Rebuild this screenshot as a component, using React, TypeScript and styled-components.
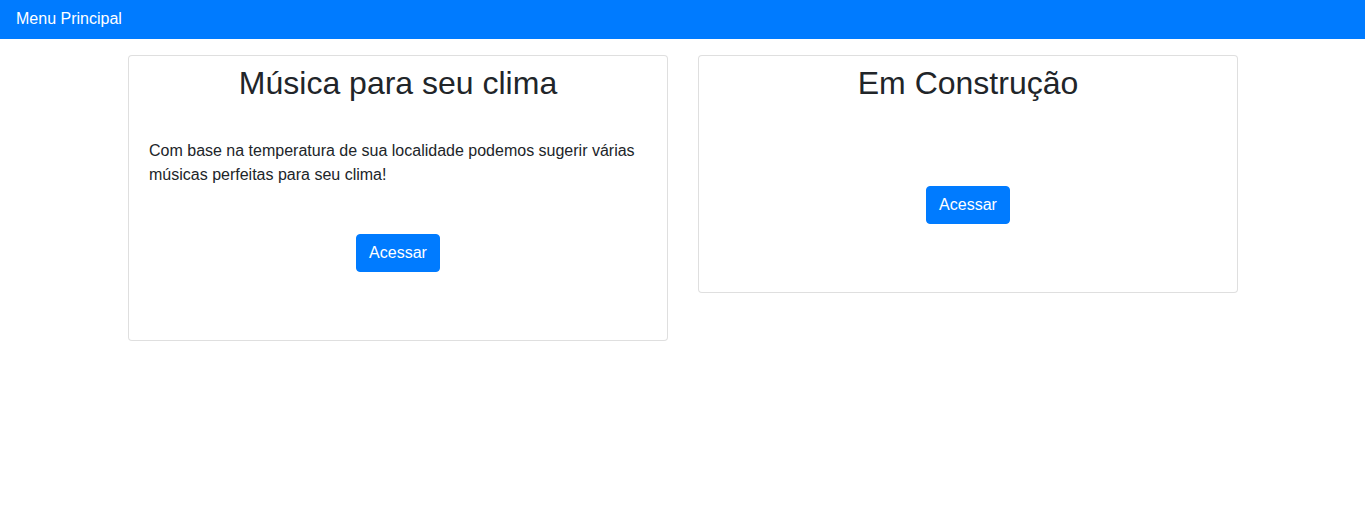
import styled, { createGlobalStyle } from "styled-components";

const GlobalStyle = createGlobalStyle`
  html, body {
    margin: 0;
    padding: 0;
    background: #ffffff;
  }

  body {
    font-family: "Liberation Sans", Arial, sans-serif;
    font-size: 16px;
    line-height: 1.5;
    color: #212529;
  }

  * {
    box-sizing: border-box;
  }
`;

/* --- navbar --- */

const NavBar = styled.nav`
  display: flex;
  align-items: center;
  height: 39px;
  padding: 0 16px 1px;
  background: #007bff;
`;

const Brand = styled.a`
  color: #ffffff;
  font-size: 16px;
  line-height: 24px;
  text-decoration: none;
  cursor: pointer;
`;

/* --- layout --- */

const Container = styled.main`
  width: 1140px;
  margin: 16px auto 0;
  padding: 0 14.5px 0 15.5px;
`;

const Row = styled.div`
  display: grid;
  grid-template-columns: 1fr 1fr;
  column-gap: 30px;
  align-items: start;
`;

const Card = styled.section`
  display: flex;
  flex-direction: column;
  padding: 8px 20px 68px;
  border: 1px solid rgba(0, 0, 0, 0.125);
  border-radius: 4px;
  background: #ffffff;
`;

const Title = styled.h2`
  margin: 0;
  font-size: 32px;
  font-weight: 400;
  line-height: 1.2;
  text-align: center;
  color: #212529;
`;

const Description = styled.p`
  margin: 36.6px 0 0;
  font-size: 16px;
  line-height: 24px;
`;

const Actions = styled.div<{ $gap: number }>`
  display: flex;
  justify-content: center;
  margin-top: ${({ $gap }) => $gap}px;
`;

const Button = styled.button`
  padding: 6px 12px;
  border: 1px solid #007bff;
  border-radius: 4px;
  background: #007bff;
  color: #ffffff;
  font-family: inherit;
  font-size: 16px;
  line-height: 24px;
  cursor: pointer;

  &:hover {
    background: #0069d9;
  }
`;

/* --- component --- */

export default function App() {
  return (
    <>
      <GlobalStyle />
      <NavBar>
        <Brand>Menu Principal</Brand>
      </NavBar>

      <Container>
        <Row>
          <Card>
            <Title>Música para seu clima</Title>
            <Description>
              Com base na temperatura de sua localidade podemos sugerir várias
              músicas perfeitas para seu clima!
            </Description>
            <Actions $gap={47}>
              <Button>Acessar</Button>
            </Actions>
          </Card>

          <Card>
            <Title>Em Construção</Title>
            <Actions $gap={83.6}>
              <Button>Acessar</Button>
            </Actions>
          </Card>
        </Row>
      </Container>
    </>
  );
}
